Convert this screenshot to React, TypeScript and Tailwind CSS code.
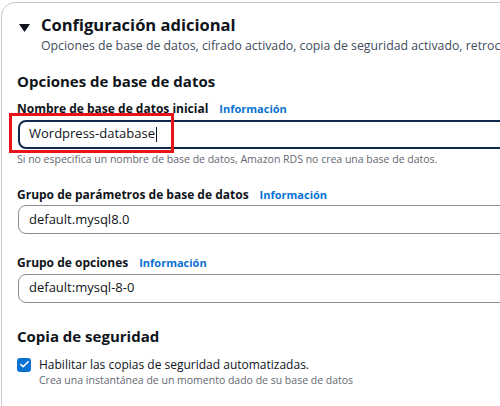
import { Check } from "lucide-react";

const font = { fontFamily: '"Open Sans", "Noto Sans", sans-serif' };

function InfoLink() {
  return <span className="ml-[11px] text-[11px] font-bold text-[#0972d3]">Información</span>;
}

function Field({ label, value, focused }: { label: string; value: string; focused?: boolean }) {
  return (
    <div>
      <div className="flex items-baseline">
        <span className="text-[12px] font-bold leading-[16px] text-[#0f141a]">{label}</span>
        <InfoLink />
      </div>
      <div
        className={
          focused
            ? "mt-[2px] ml-[1px] flex h-[29px] w-[520px] items-center rounded-[8px] border-2 border-[#0f2a4d] pl-[9px] text-[13px] text-[#0f141a]"
            : "mt-[2px] ml-[1px] flex h-[29px] w-[520px] items-center rounded-[8px] border border-[#8c8c94] pl-[10px] text-[13px] text-[#0f141a]"
        }
      >
        {value}
        {focused && <span className="ml-[1px] h-[15px] w-[1px] bg-[#0f141a]" />}
      </div>
    </div>
  );
}

export default function App() {
  return (
    <div className="h-[406px] w-[500px] overflow-hidden bg-white" style={font}>
      <div className="ml-[1px] mt-[2px] w-[560px] rounded-tl-[14px] border border-[#c6c6cd] pb-10">
        <div className="flex pl-[17px] pt-[10px]">
          <svg width="11" height="9" viewBox="0 0 11 9" className="mt-[11px] shrink-0">
            <path d="M0 0 H11 L5.5 8 Z" fill="#0f141a" />
          </svg>
          <div className="ml-[11px] min-w-0">
            <div className="text-[16.5px] font-bold leading-[24px] text-[#0f141a]">Configuración adicional</div>
            <div className="whitespace-nowrap text-[12.3px] leading-[17px] text-[#414d5c]">
              Opciones de base de datos, cifrado activado, copia de seguridad activado, retroce
            </div>
          </div>
        </div>

        <div className="px-[15px] pt-[16px]">
          <div className="text-[15px] font-bold leading-[22px] text-[#0f141a]">Opciones de base de datos</div>

          <div className="mt-[9px]">
            <div className="relative">
              <Field label="Nombre de base de datos inicial" value="Wordpress-database" focused />
              <div className="pointer-events-none absolute left-[-8px] top-[12px] h-[40px] w-[165px] border-[3px] border-[#e8141a]" />
            </div>
            <div className="mt-[3px] text-[10.5px] leading-[14px] text-[#656871]">
              Si no especifica un nombre de base de datos, Amazon RDS no crea una base de datos.
            </div>
          </div>

          <div className="mt-[21px]">
            <Field label="Grupo de parámetros de base de datos" value="default.mysql8.0" />
          </div>

          <div className="mt-[21px]">
            <Field label="Grupo de opciones" value="default:mysql-8-0" />
          </div>

          <div className="mt-[22px] text-[15px] font-bold leading-[22px] text-[#0f141a]">Copia de seguridad</div>
          <div className="mt-[9px] flex">
            <div className="mt-[2px] flex h-[14px] w-[14px] shrink-0 items-center justify-center rounded-[3px] bg-[#0972d3]">
              <Check size={11} strokeWidth={3.5} color="white" />
            </div>
            <div className="ml-[8px]">
              <div className="text-[12px] leading-[17px] text-[#0f141a]">Habilitar las copias de seguridad automatizadas.</div>
              <div className="text-[10.5px] leading-[15px] text-[#656871]">Crea una instantánea de un momento dado de su base de datos</div>
            </div>
          </div>
        </div>
      </div>
    </div>
  );
}
